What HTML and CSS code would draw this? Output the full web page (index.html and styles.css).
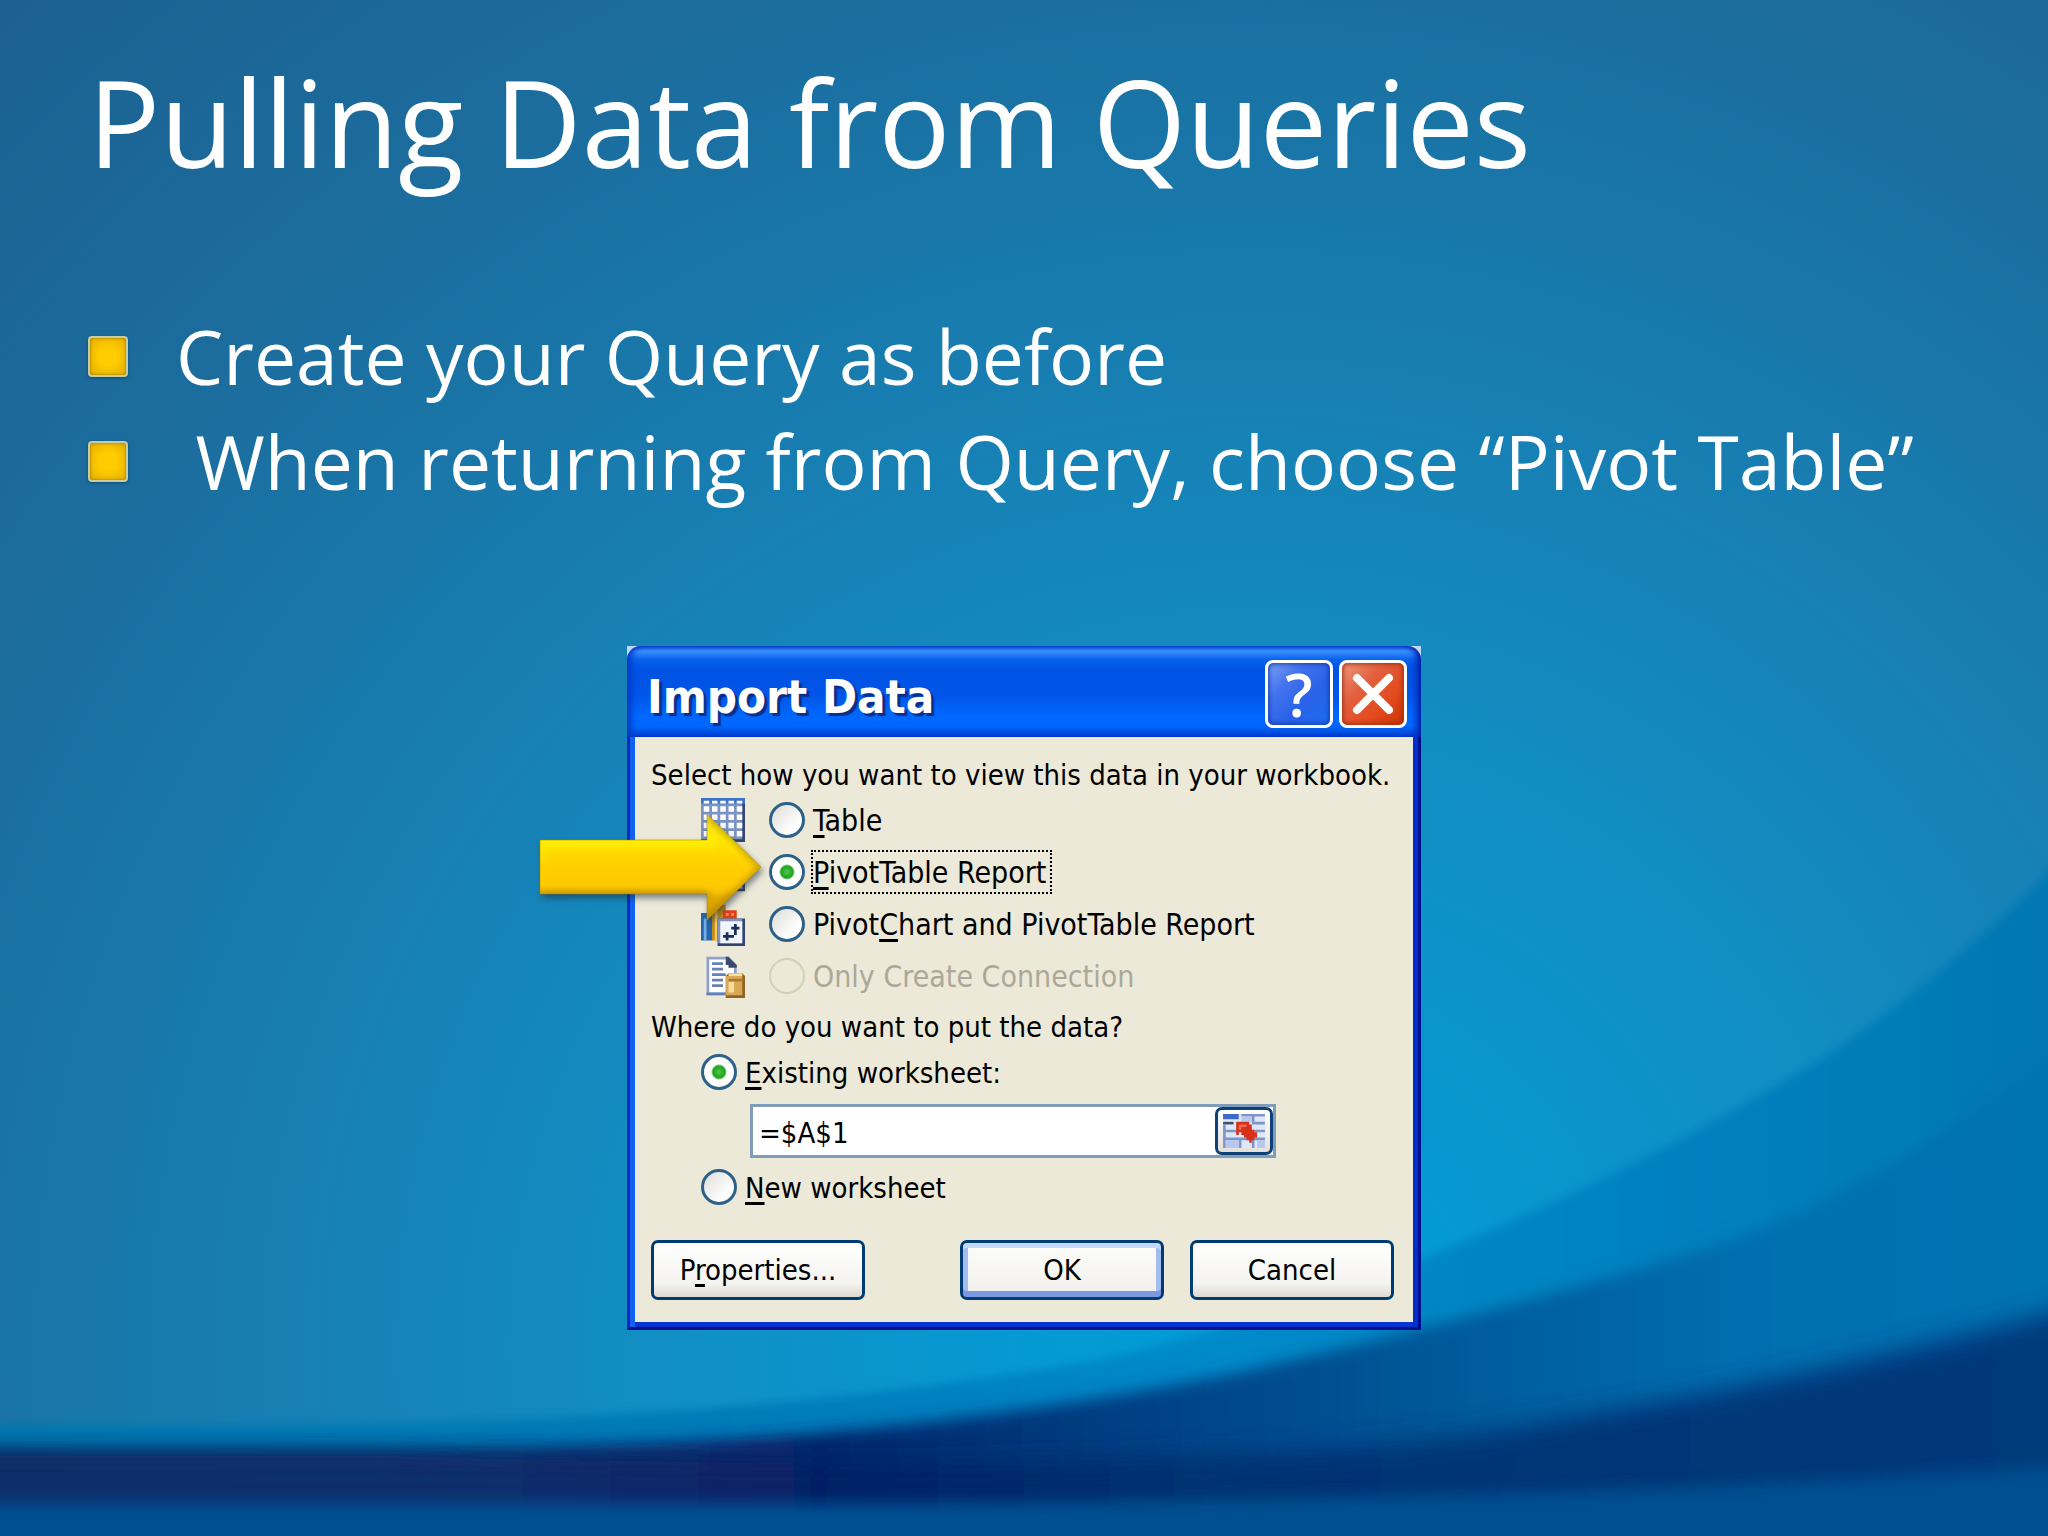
FILE: index.html
```
<!DOCTYPE html>
<html lang="en">
<head>
<meta charset="utf-8">
<title>Pulling Data from Queries</title>
<link rel="stylesheet" href="styles.css">
</head>
<body>
<main class="slide">
  <svg class="backdrop" viewBox="0 0 2048 1536" preserveAspectRatio="none" aria-hidden="true">
    <defs>
      <radialGradient id="sky" gradientUnits="userSpaceOnUse" cx="1250" cy="1350" r="1850">
        <stop offset="0" stop-color="#009cd6"/>
        <stop offset=".12" stop-color="#0599d2"/>
        <stop offset=".3" stop-color="#1090c5"/>
        <stop offset=".5" stop-color="#1781b5"/>
        <stop offset=".75" stop-color="#1b6e9f"/>
        <stop offset="1" stop-color="#1c6090"/>
      </radialGradient>
      <linearGradient id="swell" gradientUnits="userSpaceOnUse" x1="0" y1="0" x2="2048" y2="0">
        <stop offset="0" stop-color="#0077ad"/>
        <stop offset=".35" stop-color="#007ab8"/>
        <stop offset=".6" stop-color="#008aca"/>
        <stop offset=".8" stop-color="#0082c0"/>
        <stop offset="1" stop-color="#0077b2"/>
      </linearGradient>
      <linearGradient id="deep" gradientUnits="userSpaceOnUse" x1="0" y1="0" x2="2048" y2="0">
        <stop offset="0" stop-color="#102e68"/>
        <stop offset=".25" stop-color="#0c2d6b"/>
        <stop offset=".4" stop-color="#06266a"/>
        <stop offset=".55" stop-color="#003f83"/>
        <stop offset=".7" stop-color="#005898"/>
        <stop offset=".85" stop-color="#006eb0"/>
        <stop offset="1" stop-color="#0073b2"/>
      </linearGradient>
      <linearGradient id="navy" gradientUnits="userSpaceOnUse" x1="0" y1="0" x2="2048" y2="0">
        <stop offset="0" stop-color="#102e68"/>
        <stop offset=".25" stop-color="#0c2d6b"/>
        <stop offset=".4" stop-color="#061f64"/>
        <stop offset=".6" stop-color="#003272"/>
        <stop offset="1" stop-color="#003a7c"/>
      </linearGradient>
      <filter id="soft1" x="-5%" y="-5%" width="110%" height="110%"><feGaussianBlur stdDeviation="5"/></filter>
      <filter id="soft2" x="-5%" y="-10%" width="110%" height="120%"><feGaussianBlur stdDeviation="13"/></filter>
      <filter id="soft3" x="-5%" y="-20%" width="110%" height="140%"><feGaussianBlur stdDeviation="8"/></filter>
    </defs>
    <rect width="2048" height="1536" fill="url(#sky)"/>
    <path fill="url(#swell)" filter="url(#soft1)" d="M-60 1425 H200 C600 1425 860 1402 1110 1358 C1400 1290 1640 1165 1800 1072 C1900 1012 2000 922 2110 815 V1600 H-60Z"/>
    <path fill="url(#deep)" filter="url(#soft3)" d="M-60 1449 H380 C700 1449 900 1430 1110 1396 C1300 1365 1520 1305 1700 1250 C1860 1200 1990 1110 2110 1000 V1600 H-60Z"/>
    <path fill="url(#navy)" filter="url(#soft2)" d="M-60 1456 H380 C900 1470 1300 1462 1500 1430 C1700 1396 1900 1356 2110 1296 V1600 H-60Z"/>
    <path fill="#004f90" filter="url(#soft3)" d="M-60 1503 H900 C1300 1500 1700 1495 2110 1463 V1600 H-60Z"/>
  </svg>

  <h1 class="slide-title">Pulling Data from Queries</h1>
  <ul class="points">
    <li>Create your Query as before</li>
    <li> When returning from Query, choose “Pivot Table”</li>
  </ul>

  <section class="dialog" aria-labelledby="dialog-title">
    <header class="titlebar">
      <h2 id="dialog-title">Import Data</h2>
      <button type="button" class="caption help" aria-label="Help">?</button>
      <button type="button" class="caption close" aria-label="Close">
        <svg viewBox="0 0 60 60" aria-hidden="true"><path d="M14 14 46 46M46 14 14 46" stroke="#fff" stroke-width="8" stroke-linecap="round"/></svg>
      </button>
    </header>

    <form class="body">
      <p>Select how you want to view this data in your workbook.</p>
      <div class="option view">
        <svg class="icon" viewBox="0 0 16 16" aria-hidden="true">
          <path fill="#7b93c4" d="M0 0h16v16H0z"/><path fill="#3d74cc" d="M0 0h16v2H0z"/>
          <path fill="#35456f" d="M15 2h1v14H0v-1h15z"/>
          <g fill="#fff"><path d="M1 1h2v1H1zM4 1h2v1H4zM7 1h2v1H7zM10 1h2v1h-2zM13 1h2v1h-2z"/>
          <path id="cells" d="M1 3h2v2H1zM4 3h2v2H4zM7 3h2v2H7zM10 3h2v2h-2zM13 3h2v2h-2z"/>
          <use href="#cells" y="3"/><use href="#cells" y="6"/><use href="#cells" y="9"/></g>
        </svg>
        <input type="radio" name="view" id="view-table"><label for="view-table"><u>T</u>able</label>
      </div>
      <div class="option view">
        <svg class="icon" viewBox="0 0 16 16" aria-hidden="true">
          <path fill="#35456f" d="M7 6h9v9H7z"/><path fill="#e6ecfa" d="M8 7h7v7H8z"/>
        </svg>
        <input type="radio" name="view" id="view-pivot" checked><label class="focused" for="view-pivot"><u>P</u>ivotTable Report</label>
      </div>
      <div class="option view">
        <svg class="icon" viewBox="0 0 16 16" aria-hidden="true">
          <path fill="#2366b0" d="M0 4h4v10H0z"/><path fill="#77aee4" d="M1 6h1v8H1z"/>
          <path fill="#c98a14" d="M4 1h5v13H4z"/><path fill="#f4cc60" d="M5 2h1v12H5z"/>
          <path fill="#e13f14" d="M8 3h5v4H8z"/><path fill="#ff8a66" d="M9 4h1v1H9zM11 4h1v1h-1z"/>
          <path fill="#33456f" d="M6 6h10v10H6z"/><path fill="#8193bb" d="M6 6h9v9H6z"/><path fill="#f0f4fd" d="M7 7h8v8H7z"/>
          <path fill="#1d2d57" d="M12 8h1v1h1v1h-1v2h-1v1h-2v1H9v-1H8v-1h1v-1h1v1h2v-2h-1V9h1z"/>
        </svg>
        <input type="radio" name="view" id="view-chart"><label for="view-chart">Pivot<u>C</u>hart and PivotTable Report</label>
      </div>
      <div class="option view">
        <svg class="icon" viewBox="0 0 16 16" aria-hidden="true">
          <path fill="#8ea2cc" d="M2 1h8l3 3v11H2z"/><path fill="#fff" d="M3 2h6l3 3v9H3z"/>
          <path fill="#3a4a72" d="M9 1h1l3 3v1h-3V4H9z"/>
          <path fill="#6681b8" d="M4 3h4v1H4zM4 5h4v1H4zM4 7h5v1H4zM4 9h4v1H4zM4 11h4v1H4zM2 14h7v1H2z"/>
          <path fill="#8f6425" d="M9 8l1-1h5l1 1v8H9z"/><path fill="#d9a955" d="M9 8h6v7H9z"/><path fill="#f7dca0" d="M10 7h5v1h-5zM10 10h2v4h-2z"/><path fill="#a87a34" d="M10 9h5v1h-5z"/>
        </svg>
        <input type="radio" name="view" id="view-connection" disabled><label for="view-connection">Only Create Connection</label>
      </div>

      <p class="question">Where do you want to put the data?</p>
      <div class="option">
        <input type="radio" name="place" id="place-existing" checked><label for="place-existing"><u>E</u>xisting worksheet:</label>
      </div>
      <div class="reference">
        <input type="text" value="=$A$1" aria-label="Worksheet cell">
        <button type="button" aria-label="Select range">
          <svg viewBox="0 0 16 13" aria-hidden="true">
            <path fill="#dfe8fb" d="M0 0h16v13H0z"/><path fill="#3f68cc" d="M0 0h6v2H0z"/><path fill="#444f66" d="M0 3h4v1H0z"/>
            <path fill="#7f95c6" d="M7 0h9v1H7zM11 0h1v4h-1zM12 3h4v1h-4zM0 4h1v9H0zM0 6h5v1H0zM0 9h16v1H0zM6 9h1v4H6zM12 6h4v1h-4zM11 9h1v4h-1z"/>
            <path fill="#b6c8ee" d="M7 1h4v2H7zM1 10h5v3H1zM13 10h3v3h-3z"/>
            <path fill="#d9301a" d="M5 3h5v1h1v2h1v1h1v2h-1v1h-1v1h-1v-1H9V9H8V8H7V7H6v1H5z"/><path fill="#ee6a50" d="M6 4h3v1H6zM6 5h1v1H6z"/>
          </svg>
        </button>
      </div>
      <div class="option">
        <input type="radio" name="place" id="place-new"><label for="place-new"><u>N</u>ew worksheet</label>
      </div>

      <footer class="actions">
        <button type="button" class="properties">P<u>r</u>operties...</button>
        <button type="button" class="default">OK</button>
        <button type="button">Cancel</button>
      </footer>
    </form>

    <svg class="arrow" viewBox="0 0 240 140" aria-hidden="true">
      <defs>
        <linearGradient id="gold" x1="0" y1="0" x2="0" y2="1">
          <stop offset="0" stop-color="#f6dc20"/><stop offset=".25" stop-color="#ffee00"/><stop offset=".36" stop-color="#ffe400"/><stop offset=".5" stop-color="#ffd000"/><stop offset=".68" stop-color="#ffca00"/><stop offset=".78" stop-color="#e0aa00"/><stop offset="1" stop-color="#c99a00"/>
        </linearGradient>
        <linearGradient id="glow" x1="0" y1="0" x2="0" y2="1">
          <stop offset="0" stop-color="#ffe600"/><stop offset=".5" stop-color="#ffcf00"/><stop offset="1" stop-color="#fdc600"/>
        </linearGradient>
        <filter id="bevel"><feGaussianBlur stdDeviation="3"/></filter>
        <clipPath id="outline"><path d="M10 40H177V14L231 67 177 120V94H10Z"/></clipPath>
      </defs>
      <path fill="url(#gold)" d="M10 40H177V14L231 67 177 120V94H10Z"/>
      <g clip-path="url(#outline)">
        <path filter="url(#bevel)" fill="url(#glow)" d="M16 50H185V34L218 67 185 98V86H16Z"/>
        <path filter="url(#bevel)" fill="none" stroke="#a87c00" stroke-opacity=".7" stroke-width="5" d="M177 14 231 67 177 120M177 94H10"/>
      </g>
      <path fill="none" stroke="#a98200" stroke-opacity=".5" d="M10 40H177V14L231 67 177 120V94H10Z"/>
    </svg>
  </section>
</main>
</body>
</html>
```
FILE: styles.css
```
*, *::before { box-sizing: border-box; }

body { margin: 0; background: #1a6fa1; }

.slide {
  position: relative;
  z-index: 0;
  min-height: 100vh;
  padding: 50px 88px 0;
  display: flex;
  flex-direction: column;
  color: #fff;
  font-family: "Segoe UI", "Open Sans", sans-serif;
  overflow: hidden;
}

.backdrop {
  position: absolute;
  inset: 0;
  z-index: -1;
  width: 100%;
  height: 100%;
}

.slide-title {
  margin: 0;
  font-size: 120px;
  font-weight: 400;
  line-height: 144px;
}

.points {
  list-style: none;
  margin: 110px 0 0;
  padding: 0;
  font-size: 75px;
  line-height: 105px;
}

.points li {
  display: flex;
  align-items: center;
  gap: 48px;
  white-space: pre-wrap;
}

.points li::before {
  content: "";
  flex: none;
  width: 40px;
  height: 41px;
  border: 2px solid #c9cba0;
  border-radius: 4px;
  background: radial-gradient(circle, #ffcc00 35%, #e3ad00 100%);
  box-shadow: inset 0 0 3px #8d7208, 0 1px 3px #0d4a70;
}

/* Import Data dialog */
.dialog {
  position: relative;
  align-self: center;
  width: 794px;
  margin: 132px 0 60px;
  background: #bcd9f3;
  color: #000;
  font-family: Tahoma, "DejaVu Sans Condensed", sans-serif;
  font-size: 29px;
}

.titlebar {
  display: flex;
  align-items: center;
  gap: 6px;
  height: 91px;
  padding: 10px 14px 5px 20px;
  border-radius: 14px 14px 0 0;
  background: linear-gradient(#0a50d8 0, #3a92ff 5px, #2a80f8 8px, #0560ea 14px, #0052e2 24px, #0056e8 50px, #0068ff 70px, #0066fc 80px, #0043d2 90px);
  box-shadow: inset 6px 0 6px -2px #0038c8, inset -6px 0 6px -2px #001ea8;
}

.titlebar h2 {
  flex: 1;
  margin: 0;
  padding-top: 6px;
  color: #fff;
  font-size: 47px;
  line-height: 60px;
  text-shadow: 3px 3px 1px #0a2f8c;
}

.caption {
  display: grid;
  place-items: center;
  width: 68px;
  height: 68px;
  padding: 0;
  border: 3px solid #fff;
  border-radius: 8px;
  color: #fff;
  font: 600 60px/60px "Open Sans", sans-serif;
}

.caption svg { width: 60px; height: 60px; }

.help {
  background: linear-gradient(135deg, #7fa2f4 0, #4474ee 30%, #2a62e8 60%, #1c6cf2 100%);
  box-shadow: inset 0 0 5px 1px #1239ac;
}

.close {
  background: linear-gradient(135deg, #f0987c 0, #e2603f 35%, #e2491c 70%, #c83405 100%);
  box-shadow: inset 0 0 5px 1px #a02c0a;
}

.body {
  padding: 19px 24px 27px 21px;
  border: 3px solid;
  border-top: 0;
  border-color: #0429c8 #00108c #00108c #0429c8;
  background: #ece9d8;
  box-shadow: inset 5px 0 #1262f0, inset -5px 0 #0330cc, inset 0 -5px #0534d0;
}

.body p {
  margin: 0;
  line-height: 38px;
  white-space: nowrap;
}

.body .question { margin-top: 6px; }

.option {
  display: flex;
  align-items: center;
  height: 52px;
  padding-left: 50px;
}

.icon {
  width: 44px;
  height: 44px;
  margin-right: 24px;
}

.option input {
  appearance: none;
  flex: none;
  width: 36px;
  height: 36px;
  margin: 0 6px 0 0;
  border: 3px solid #2d6189;
  border-radius: 50%;
  background: linear-gradient(135deg, #dcdcd8, #fff 75%);
}

.option input:checked {
  background: radial-gradient(circle, #4cc84a 0, #1fa11e 6px, #fff 8px);
}

.option input:disabled {
  border: 2px solid #d2cfba;
  background: #ece9d8;
}

.option input:disabled + label { color: #aca899; }

.option label {
  padding: 2px 4px 0 0;
  border: 2px solid transparent;
  line-height: 38px;
}

.view label { font-size: 30px; }

.option .focused { border: 2px dotted #000; }

u {
  text-decoration-thickness: 3px;
  text-underline-offset: 4px;
}

.reference {
  display: flex;
  width: 526px;
  height: 54px;
  margin: 6px 0 3px 99px;
  border: 3px solid #7f9db9;
  background: #fff;
}

.reference input {
  flex: 1;
  min-width: 0;
  padding: 4px 0 0 6px;
  border: 0;
  background: none;
  font: inherit;
}

.reference button {
  display: grid;
  place-items: center;
  width: 58px;
  padding: 0;
  border: 3px solid #0f407a;
  border-radius: 7px;
  background: linear-gradient(#fff, #e4e0d8);
}

.reference svg { width: 42px; height: 34px; }

.actions {
  display: flex;
  gap: 26px;
  margin-top: 27px;
}

.actions button {
  width: 204px;
  height: 60px;
  padding: 0;
  border: 3px solid #003c74;
  border-radius: 7px;
  background: linear-gradient(#fff, #f4f3f0 75%, #dedad0);
  font: inherit;
}

.actions .properties {
  width: 214px;
  margin-right: auto;
}

.actions .default {
  background: linear-gradient(#fdfdfb, #f0efeb);
  box-shadow: inset 0 5px #c2d9f8, inset 0 -6px #7d98e2, inset 5px 0 #a3bdf0, inset -5px 0 #a3bdf0;
}

.arrow {
  position: absolute;
  top: 154px;
  left: -97px;
  width: 240px;
  height: 140px;
  filter: drop-shadow(2px 4px 3px rgb(30 50 60 / .55));
}
```
